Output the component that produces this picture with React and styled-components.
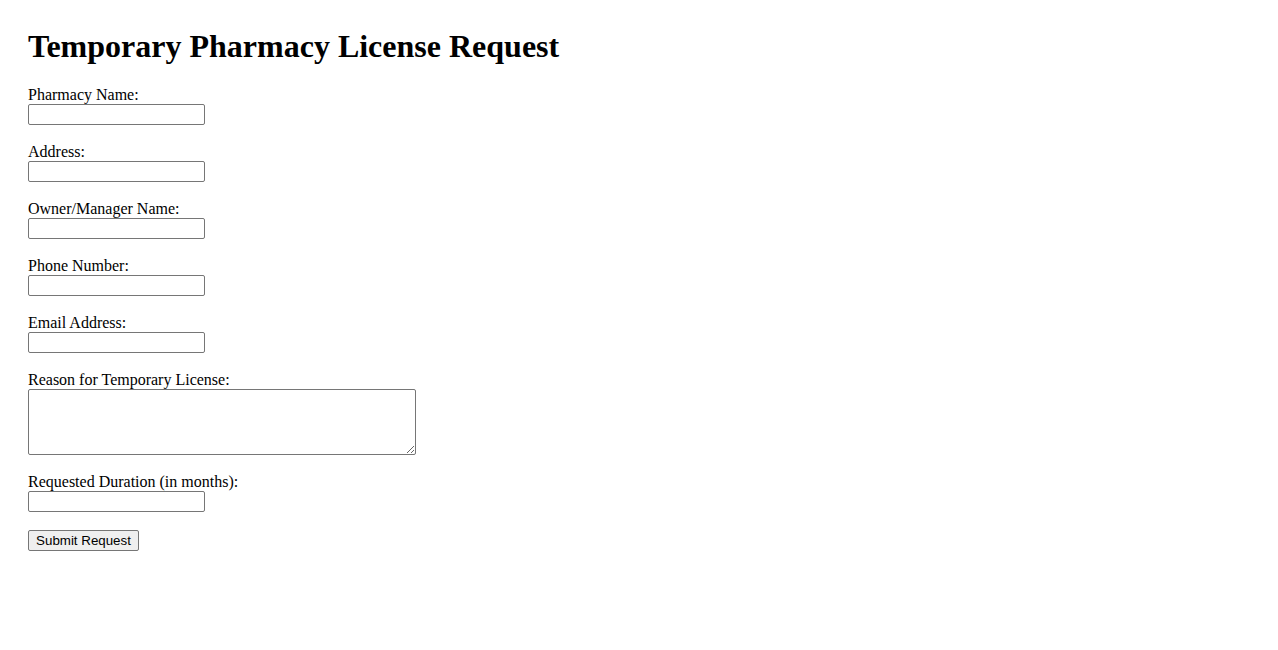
import React from 'react';
import styled, { createGlobalStyle } from 'styled-components';

const GlobalStyle = createGlobalStyle`
    body {
        margin: 0;
        background: #ffffff;
        color: #000000;
        font-family: "Liberation Serif", "Times New Roman", serif;
        font-size: 16px;
    }
`

const Page = styled.div`
    padding: 28px;
`

const Title = styled.h1`
    margin: 0 0 21px;
    font-size: 32px;
    font-weight: bold;
    line-height: 37px;
`

const Form = styled.form`
    display: flex;
    flex-direction: column;
    align-items: flex-start;
    gap: 18px;
`

const Field = styled.div`
    display: flex;
    flex-direction: column;
    align-items: flex-start;
`

const Label = styled.label`
    display: block;
    line-height: 18px;
    height: 18px;
`

const TextInput = styled.input`
    box-sizing: border-box;
    width: 177px;
    height: 21px;
    margin: 0;
    padding: 1px 2px;
    border: 1px solid #767676;
    border-radius: 2px;
    font-family: "Liberation Sans", Arial, sans-serif;
    font-size: 13.33px;
    background: #ffffff;
`

const TextArea = styled.textarea`
    box-sizing: border-box;
    width: 388px;
    height: 66px;
    margin: 0;
    padding: 2px;
    border: 1px solid #767676;
    border-radius: 2px;
    font-family: "Liberation Mono", monospace;
    font-size: 13.33px;
    resize: both;
`

const SubmitButton = styled.button`
    box-sizing: border-box;
    width: 111px;
    height: 21px;
    margin: 0;
    padding: 1px 6px;
    border: 1px solid #767676;
    border-radius: 2px;
    background: #efefef;
    color: #000000;
    font-family: "Liberation Sans", Arial, sans-serif;
    font-size: 13.33px;
    line-height: 17px;
`

const fields = [
    { id: 'pharmacyName', label: 'Pharmacy Name:' },
    { id: 'address', label: 'Address:' },
    { id: 'ownerName', label: 'Owner/Manager Name:' },
    { id: 'phone', label: 'Phone Number:', type: 'tel' },
    { id: 'email', label: 'Email Address:', type: 'email' },
];

export default function App() {
    return (
        <Page>
            <GlobalStyle />
            <Title>Temporary Pharmacy License Request</Title>
            <Form onSubmit={e => e.preventDefault()}>
                {fields.map(f => (
                    <Field key={f.id}>
                        <Label htmlFor={f.id}>{f.label}</Label>
                        <TextInput id={f.id} type={f.type || 'text'} />
                    </Field>
                ))}
                <Field>
                    <Label htmlFor="reason">Reason for Temporary License:</Label>
                    <TextArea id="reason" />
                </Field>
                <Field>
                    <Label htmlFor="duration">Requested Duration (in months):</Label>
                    <TextInput id="duration" type="text" />
                </Field>
                <SubmitButton type="submit">Submit Request</SubmitButton>
            </Form>
        </Page>
    );
}
